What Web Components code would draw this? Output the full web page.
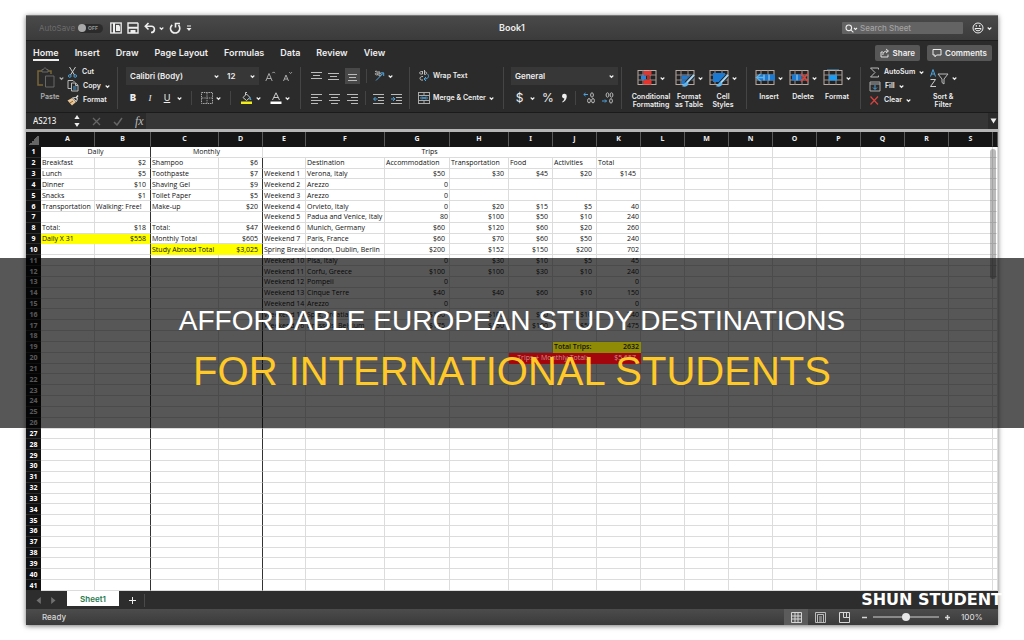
<!DOCTYPE html>
<html lang="en">
<head>
<meta charset="utf-8">
<title>Affordable European Study Destinations for International Students</title>
<style>
body{margin:0;background:#fff;font-family:Inter,"Liberation Sans",sans-serif;color:#eee}
</style>
</head>
<body>
<study-page></study-page>
<script>
const define = (name, html) => customElements.define(name, class extends HTMLElement {
  connectedCallback() {
    if (this.shadowRoot) return;
    const t = document.createElement('template');
    t.innerHTML = typeof html === 'function' ? html(this) : html;
    this.attachShadow({ mode: 'open' }).append(t.content.cloneNode(true));
  }
});

/* Icon artwork: [width, height, shapes] */
const line = 'class="l"';
const bars = (rows) => rows.map(([x, y, l]) => `<path d="M${x} ${y}h${l}" ${line} stroke="#bbb"/>`).join('');
const gridArt = (inner) => `<rect x="1" y="1.500" width="18" height="14" fill="#222" stroke="#b9aaa4"/><path d="M1 6h18M1 11h18M6 1v15M13 1v15" stroke="#9c8f8a" fill="none"/>${inner}`;
const brush = '<path d="M18.500 6.500L11 14.500" stroke="#1d1d1d" stroke-width="4"/><path d="M19 6l-7.500 8" stroke="#a9d3ee" stroke-width="2"/><path d="M11.500 13c-2 0-2 3-5 4 3 1.500 7 .5 7-2.500z" fill="#5fb4ea"/>';
const icons = {
  chevron: [5, 5, `<path d="M.7 1.500L2.500 3.300 4.300 1.500" ${line} stroke-width="1.200"/>`],
  panel: [12, 12, `<rect x=".8" y="1" width="10.400" height="10" ${line} stroke-width="1.300"/><path d="M4 1v10" ${line} stroke-width="2"/><path d="M6 3h3l1 1.500V9H6z" fill="currentColor"/>`],
  save: [12, 12, `<path d="M1 1h9.500l.5.5V11H1z" ${line} stroke-width="1.400"/><path d="M1 4.800h10v2H1zM3.500 8h5v3h-5z" fill="currentColor"/>`],
  undo: [12, 12, `<path d="M4.500 1L1.300 4.300l3.200 3.200M1.500 4.300h6c4 0 4 6.200-.5 6.200" ${line} stroke-width="1.600"/>`],
  redo: [12, 12, `<path d="M3.200 2.800C-.2 6 2 11 6 11s6.300-4.500 3.500-8M6.500 5.500V1.500H11" ${line} stroke-width="1.600"/>`],
  more: [6, 7, '<path d="M1 1h4" stroke="currentColor"/><path d="M.5 3h5L3 6z" fill="currentColor"/>'],
  search: [13, 9, `<circle cx="3.800" cy="3.800" r="2.800" ${line} stroke-width="1.100"/><path d="M5.800 5.800l2.600 2.600M9 4l1.500 1.500L12 4" ${line} stroke-width="1.100"/>`],
  smile: [12, 12, `<circle cx="6" cy="6" r="5" ${line}/><path d="M3 6.500h6c0 3-6 3-6 0zM4.300 3v1.800M7.700 3v1.800" ${line}/>`],
  share: [10, 10, `<path d="M3 4H1v5h7V6.500M2.800 7c0-3 2-4 5-4M6 1l2.500 2L6 5" ${line} stroke-width=".9"/>`],
  comment: [10, 10, `<path d="M1 1.500h8v5.500H4.500L3 8.800V7H1z" ${line}/>`],
  paste: [20, 22, `<path d="M6 4H2v14h5" ${line} stroke="#a5873f" stroke-width="1.500"/><path d="M12 4h3v3" ${line} stroke="#a5873f" stroke-width="1.500"/><path d="M6 2.500h1.500c0-2 3-2 3 0H12V5H6z" ${line} stroke="#8a8a8a"/><path d="M9.500 9H18v11H9.500z" ${line} stroke="#8a8a8a"/>`],
  cut: [11, 11, `<path d="M2.500 0L7.500 8M8.500 0L3.500 8" ${line} stroke="#ccc"/><circle cx="2.800" cy="9" r="1.300" ${line} stroke="#4ea4dd"/><circle cx="8.200" cy="9" r="1.300" ${line} stroke="#4ea4dd"/>`],
  copy: [12, 12, `<path d="M4 8.500H1v-8h5l1.500 1.500" ${line} stroke="#bbb"/><path d="M4.500 3h4.200L11 5.200V11H4.500zM8.500 3v2.500H11" ${line} stroke="#bbb"/><path d="M6 7h3.500M6 9h3.500" stroke="#4ea4dd"/>`],
  painter: [12, 11, '<path d="M.5 5.500L5 3l4 4-4 3.500z" fill="#e7c79a"/><path d="M3 8l3-2" stroke="#94621f"/><path d="M5.500 3l4 3.500 1-3-2-1z" fill="#333" stroke="#ddd"/><path d="M9 3l2-2.500" stroke="#ddd" stroke-width="1.500"/>'],
  grow: [11, 11, `<path d="M.8 10L4 2.500 7.200 10M2 7.500h4" ${line} stroke="#aaa"/><path d="M7.300 2.200L8.600.9 9.900 2.200" ${line} stroke="#aaa"/>`],
  shrink: [11, 11, `<path d="M1.500 10L4 4l2.500 6M2.300 8h3.400" ${line} stroke="#aaa"/><path d="M7.300 1.200L8.600 2.500 9.900 1.200" ${line} stroke="#aaa"/>`],
  borders: [12, 12, `<rect x=".5" y=".5" width="11" height="11" ${line} stroke="#aaa" stroke-dasharray="1.500 .8"/><path d="M6 1v10M1 6h10" ${line} stroke="#999" stroke-dasharray="1.500 .8"/>`],
  fill: [13, 12, `<path d="M3 5.500l3.500-3.500 3.500 3.500-3.500 3z" ${line} stroke="#ccc"/><path d="M5.500 3V.5h1.500" ${line} stroke="#ccc"/><path d="M10 4.500l1.500 3.500-2 0z" fill="#4ea4dd"/><path d="M1 9.500h11v2.500H1z" fill="#f2ec17"/>`],
  fontcolor: [12, 12, `<path d="M2.500 8L6 .8 9.500 8M3.800 5.500h4.400" ${line} stroke="#ccc"/><path d="M.5 9.500h11V12H.5z" fill="#fff"/>`],
  top: [11, 11, bars([[0, 1.5, 11], [2, 4.5, 7], [0, 7.5, 11]])],
  middle: [11, 11, bars([[0, 2.5, 11], [2, 5.5, 7], [0, 8.5, 11]])],
  bottom: [11, 11, bars([[1, 3.5, 9], [2, 6.5, 7], [1, 9.5, 9]])],
  left: [11, 11, bars([[0, 1.5, 11], [0, 4.5, 7], [0, 7.5, 11], [0, 10.5, 7]])],
  center: [11, 11, bars([[0, 1.5, 11], [2, 4.5, 7], [0, 7.5, 11], [2, 10.5, 7]])],
  right: [11, 11, bars([[0, 1.5, 11], [4, 4.5, 7], [0, 7.5, 11], [4, 10.5, 7]])],
  orient: [12, 12, `<path d="M2 1.500c3-1 3 1 2.500 3.500-3 0-3-2-.5-2M6 1v5c3 0 3-3 0-3" ${line} stroke="#bbb"/><path d="M3 10.500L10.500 3M10.700 6V2.800H7.500" ${line} stroke="#4ea4dd"/>`],
  outdent: [11, 11, bars([[0, 1.5, 11], [5, 4.5, 6], [5, 7.5, 6], [0, 10.5, 11]]) + `<path d="M4.500 6H.8M2.500 4L.6 6l1.900 2" ${line} stroke="#4ea4dd"/>`],
  indent: [11, 11, bars([[0, 1.5, 11], [5, 4.5, 6], [5, 7.5, 6], [0, 10.5, 11]]) + `<path d="M0 6h3.800M2 4l1.900 2L2 8" ${line} stroke="#4ea4dd"/>`],
  wrap: [12, 12, `<path d="M4.500 1.500c-4 0-4 3 0 2.500V1M6.500 0v4.500c3 0 3-3 0-2.500M5 6.500C1 6 1 11 5 10" ${line} stroke="#bbb"/><path d="M9.500 4c2 2 1 5-3 5M8 7L6 9l2 2" ${line} stroke="#4ea4dd"/>`],
  merge: [12, 12, `<rect x=".5" y=".5" width="11" height="11" ${line} stroke="#aaa"/><path d="M1 3.500h10M1 8.500h10M6 1v2M6 9v2" ${line} stroke="#aaa"/><path d="M2 6h8M4 4.500L5.500 6 4 7.500M8 4.500L6.500 6 8 7.500" ${line} stroke="#4ea4dd"/>`],
  comma: [7, 10, '<path d="M1 3a2.200 2.200 0 1 1 4.800.5C5.500 6.500 4 8.500 1.500 9.500L1.200 8.800C2.500 8 3.200 7 3.300 5.300 2 5.300 1 4.400 1 3z" fill="currentColor"/>'],
  moredec: [12, 12, `<path d="M5 2.500H.8M2.500 1L.8 2.500 2.500 4" ${line} stroke="#4ea4dd"/><g ${line} stroke="#bbb"><ellipse cx="9" cy="3" rx="1.400" ry="2.200"/><ellipse cx="6" cy="8.700" rx="1.400" ry="2.200"/><ellipse cx="10" cy="8.700" rx="1.400" ry="2.200"/></g>`],
  lessdec: [12, 12, `<path d="M0 9h4.500M3 7.500L4.500 9 3 10.500" ${line} stroke="#4ea4dd"/><g ${line} stroke="#bbb"><ellipse cx="5.500" cy="3" rx="1.400" ry="2.200"/><ellipse cx="9.500" cy="3" rx="1.400" ry="2.200"/><ellipse cx="9" cy="8.900" rx="1.400" ry="2.200"/></g>`],
  condfmt: [20, 18, gridArt('<path d="M6.500 2h8v4h-8zM6.500 11h8v4.500h-8z" fill="#e3342f"/><path d="M4 6.500h5v4H4z" fill="#2b82d9"/><path d="M10 6.500h3v4h-3z" fill="#b03028"/>')],
  fmttable: [20, 18, gridArt('<path d="M6.500 6.500h6v4h-6zM13.500 6.500h5v4h-5zM6.500 11.500h6v3.500h-6z" fill="#1d7ad2"/>' + brush)],
  cellstyles: [20, 18, gridArt('<path d="M4 4h12v9H4z" fill="#1d7ad2"/>' + brush)],
  insert: [20, 18, gridArt('<path d="M4 5.500h16v6H4z" fill="#1d7ad2"/><path d="M9 5.500v6M14 5.500v6" stroke="#a9d3ee"/><path d="M5.500 5L1.500 8.500 5.500 12M2 8.500h7" fill="none" stroke="#5fb4ea" stroke-width="1.500"/>')],
  delete: [20, 18, gridArt('<path d="M3 5.500h9v6H3z" fill="#1d7ad2"/><path d="M8 5.500v6" stroke="#a9d3ee"/><path d="M12 4.500l7 8M19 4.500l-7 8" stroke="#d8443f" stroke-width="1.800"/>')],
  format: [20, 18, gridArt('<path d="M6 6h8v5.500H6z" fill="#1d9af2"/><path d="M4 0h12" stroke="#4ea4dd"/>')],
  sum: [11, 11, `<path d="M9.500 2.500V1H1.500L6 5.500 1.500 10h8V8.500" ${line} stroke="#bbb"/>`],
  filldown: [12, 11, `<path d="M1 1h10v9H1zM1 3h10" ${line} stroke="#aaa"/><path d="M6 4v4M4 6.500L6 8.500l2-2" ${line} stroke="#4ea4dd"/>`],
  clear: [11, 11, `<path d="M1.500 1.500l7.500 8M9 1.500l-7.500 8" ${line} stroke="#d8443f" stroke-width="1.200"/>`],
  sort: [20, 20, `<path d="M1.500 8.500L4 1.500l2.500 7M2.300 6h3.400" ${line} stroke="#4ea4dd"/><path d="M1.500 11.500h5l-5 7h5.500" ${line} stroke="#ccc"/><path d="M9 6h10l-4 5v5l-2-1.500V11z" ${line} stroke="#bbb"/>`],
  stepper: [6, 12, '<path d="M3 0l2.600 4H.4zM3 12L.4 8h5.200z" fill="currentColor"/>'],
  cross: [9, 9, `<path d="M1 1l7 7M8 1L1 8" ${line} stroke="#666" stroke-width="1.300"/>`],
  check: [10, 9, `<path d="M1 5l3 3 5-7" ${line} stroke="#666" stroke-width="1.500"/>`],
  down: [7, 6, '<path d="M.5 .5h6L3.500 5.500z" fill="currentColor"/>'],
  prev: [5, 7, '<path d="M4.800 0v7L.5 3.500z" fill="#707070"/>'],
  next: [5, 7, '<path d="M.2 0v7l4.300-3.500z" fill="#707070"/>'],
  normal: [11, 11, `<path d="M.5.5h10v10H.5zM4 1v9M7 1v9M1 4h9M1 7h9" ${line}/>`],
  page: [11, 11, `<path d="M.5.5v10h10V.5zM2.500 2.500h6v8M2.500 2.500v8M4 5h3M4 7h3M4 9h3" ${line} stroke="#bbb"/>`],
  breaks: [11, 11, `<path d="M.5.5h10v10H.5zM4.500.5v5h6M7.500.5v5" ${line}/>`],
  minus: [7, 7, `<path d="M1 3.500h5" ${line} stroke-width="1.500"/>`],
  plus: [7, 7, `<path d="M1 3.500h5M3.500 1v5" ${line} stroke-width="1.500"/>`],
  add: [9, 9, `<path d="M1 4.500h7M4.500 1v7" ${line}/>`]
};
define('ui-icon', el => {
  const [w, h, art] = icons[el.getAttribute('name')];
  return `<style>:host{display:block;flex:none;width:${w}px;height:${h}px}svg{display:block}.l{fill:none}.l:not([stroke]){stroke:currentColor}</style>
  <svg width="${w}" height="${h}" viewBox="0 0 ${w} ${h}" aria-hidden="true">${art}</svg>`;
});

const buttonReset = 'button{appearance:none;border:0;margin:0;padding:0;background:none;color:inherit;font:inherit;white-space:nowrap;display:flex;align-items:center}';

/* Small button: icon, optional text, optional menu chevron */
define('tool-button', el => `<style>
:host{display:block;flex:none}${buttonReset}
button{gap:4px;height:14px;font-size:7px;line-height:10px;font-weight:600}
:host([pressed]) button{background:#484848;height:16px;padding:0 2px}
:host([icon-only]) button{gap:6px}
:host([wide]) button{gap:3px}
</style><button type="button" aria-label="${el.getAttribute('label') || el.textContent.trim()}">
${el.hasAttribute('icon') ? `<ui-icon name="${el.getAttribute('icon')}"></ui-icon>` : ''}<slot></slot>
${el.hasAttribute('menu') ? '<ui-icon name="chevron"></ui-icon>' : ''}</button>`);

/* Large button: icon over a one or two line caption */
define('big-button', el => `<style>
:host{display:block;flex:none;width:34px}${buttonReset}
button{flex-direction:column;width:100%;padding-top:3px;font-size:7px;line-height:8px;font-weight:600;text-align:center}
.art{display:flex;align-items:center;justify-content:center;gap:3px;height:20px;margin-bottom:5px}
</style><button type="button"><span class="art"><ui-icon name="${el.getAttribute('icon')}"></ui-icon><ui-icon name="chevron"></ui-icon></span><span><slot></slot></span></button>`);

define('drop-down', el => `<style>
:host{display:grid;align-items:center;background:#373737;height:18px}
select,ui-icon{grid-area:1/1}ui-icon{justify-self:end;margin-right:4px;pointer-events:none}
select{appearance:none;border:0;background:none;color:inherit;width:100%;height:18px;padding:0 4px;font:600 8px/10px Inter,"Liberation Sans",sans-serif}
</style><select aria-label="${el.getAttribute('label')}"><option>${el.getAttribute('value')}</option></select><ui-icon name="chevron"></ui-icon>`);

define('title-bar', `<style>
:host{display:grid;grid-template-columns:1fr auto 1fr;align-items:center;height:26px;background:linear-gradient(#494949,#3b3b3b);border-bottom:1px solid #1d1d1d;box-sizing:border-box;border-top:1px solid #777}
.left,.right{display:flex;align-items:center}
.left{padding-left:13px;gap:5px}.right{justify-content:flex-end;padding-right:6px;gap:4px}
label{display:flex;align-items:center;gap:3px;font-size:8px;color:#6c6c6c;margin-right:2px}
.switch{display:grid;align-items:center;width:25px;height:9px;border-radius:5px;background:#2b2b2b;font-size:5px;color:#999}
.switch input,.switch span{grid-area:1/1}.switch span{margin-left:10px;font-weight:700}
input[type=checkbox]{appearance:none;margin:0;width:8px;height:8px;border-radius:50%;background:#aaa}
h1{margin:0;font-size:9px;line-height:12px;font-weight:600}
.search{display:flex;align-items:center;gap:2px;width:121px;height:12px;background:#636363;padding-left:3px;box-sizing:border-box;margin-right:5px;border-radius:1px}
.search input{flex:1;min-width:0;border:0;padding:0;background:none;font:500 8px/12px Inter,"Liberation Sans",sans-serif;color:#eee}
.search input::placeholder{color:#a2a2a2;opacity:1}
</style>
<div class="left"><label>AutoSave <span class="switch"><input type="checkbox"><span>OFF</span></span></label>
<tool-button icon="panel" label="Show panel"></tool-button><tool-button icon="save" label="Save"></tool-button>
<tool-button wide icon="undo" menu label="Undo"></tool-button><tool-button icon="redo" label="Redo"></tool-button><tool-button icon="more" label="Customize toolbar"></tool-button></div>
<h1>Book1</h1>
<div class="right"><div class="search"><ui-icon name="search"></ui-icon><input type="search" aria-label="Search Sheet" placeholder="Search Sheet"></div>
<tool-button wide icon="smile" menu label="Feedback"></tool-button></div>`);

define('ribbon-tabs', `<style>
:host{display:flex;align-items:center;justify-content:space-between;height:23px;padding:0 6px 0 7px}${buttonReset}
nav,.actions{display:flex}nav{gap:16px}.actions{gap:7px}
nav button{font-size:9px;line-height:12px;font-weight:600;border-top:2px solid transparent;border-bottom:2px solid transparent}
nav button[aria-selected=true]{border-bottom-color:#eee}
.actions button{height:16px;padding:0 5px;gap:3px;background:#575757;border-radius:2px;font-size:8px;font-weight:600}
</style>
<nav role="tablist">${['Home', 'Insert', 'Draw', 'Page Layout', 'Formulas', 'Data', 'Review', 'View'].map((t, i) => `<button type="button" role="tab" aria-selected="${!i}">${t}</button>`).join('')}</nav>
<div class="actions"><button type="button"><ui-icon name="share"></ui-icon>Share</button><button type="button"><ui-icon name="comment"></ui-icon>Comments</button></div>`);

define('ribbon-group', `<style>
:host{display:flex;box-sizing:border-box;height:46px;width:var(--w);flex:none;padding-left:var(--pad,8px);background:linear-gradient(#454545,#454545) right center/1px 42px no-repeat}
:host([last]){background:none;flex:1}
</style><slot></slot>`);

define('tool-ribbon', `<style>
:host{display:flex;align-items:center;height:48px}
.rows{display:grid;grid-template-rows:18px 18px;align-content:start;row-gap:4px;flex:1;min-width:0;padding-top:2px}
.row{display:flex;align-items:center}
.stack{display:grid;grid-template-rows:repeat(3,14px);align-content:start;align-items:center}
.paste{width:34px;opacity:.65}
.sep{width:1px;height:14px;background:#444}
.glyph{width:8px;text-align:center;font-size:9px}
.money{width:9px;text-align:center;font-size:12px;font-weight:400;line-height:14px}
.fonts{display:grid;grid-template-columns:97px 36px}
</style>
<ribbon-group style="--w:92px;--pad:7px"><big-button class="paste" icon="paste">Paste</big-button>
 <div class="stack"><tool-button icon="cut">Cut</tool-button><tool-button icon="copy" menu>Copy</tool-button><tool-button icon="painter">Format</tool-button></div></ribbon-group>
<ribbon-group style="--w:183px"><div class="rows">
 <div class="row" style="gap:6px"><div class="fonts"><drop-down label="Font" value="Calibri (Body)"></drop-down><drop-down label="Font size" value="12"></drop-down></div><tool-button icon="grow" label="Increase font size"></tool-button><tool-button icon="shrink" label="Decrease font size"></tool-button></div>
 <div class="row" style="gap:9px;padding-left:3px"><tool-button label="Bold"><b class="glyph">B</b></tool-button><tool-button label="Italic"><i class="glyph" style="font-weight:400;font-family:'Liberation Serif',serif">I</i></tool-button><tool-button icon-only menu label="Underline"><u class="glyph" style="font-weight:400">U</u></tool-button><span class="sep"></span><tool-button wide icon="borders" menu label="Borders"></tool-button><span class="sep"></span><tool-button wide icon="fill" menu label="Fill color"></tool-button><tool-button wide icon="fontcolor" menu label="Font color"></tool-button></div>
</div></ribbon-group>
<ribbon-group style="--w:109px;--pad:10px"><div class="rows">
 <div class="row" style="gap:6px"><tool-button icon="top" label="Align top"></tool-button><tool-button icon="middle" label="Align middle"></tool-button><tool-button pressed icon="bottom" label="Align bottom"></tool-button><span class="sep"></span><tool-button wide icon="orient" menu label="Orientation"></tool-button></div>
 <div class="row" style="gap:7px"><tool-button icon="left" label="Align left"></tool-button><tool-button icon="center" label="Center"></tool-button><tool-button icon="right" label="Align right"></tool-button><span class="sep"></span><tool-button icon="outdent" label="Decrease indent"></tool-button><tool-button icon="indent" label="Increase indent"></tool-button></div>
</div></ribbon-group>
<ribbon-group style="--w:94px"><div class="rows">
 <div class="row"><tool-button wide icon="wrap">Wrap Text</tool-button></div>
 <div class="row"><tool-button wide icon="merge" menu>Merge &amp; Center</tool-button></div>
</div></ribbon-group>
<ribbon-group style="--w:118px;--pad:7px"><div class="rows">
 <drop-down style="margin-right:4px" label="Number format" value="General"></drop-down>
 <div class="row" style="gap:7px;padding-left:4px"><tool-button icon-only menu label="Currency"><span class="money">$</span></tool-button><tool-button label="Percent"><span class="money">%</span></tool-button><tool-button icon="comma" style="margin-left:3px" label="Comma style"></tool-button><span class="sep"></span><tool-button icon="moredec" label="Increase decimal"></tool-button><tool-button icon="lessdec" label="Decrease decimal"></tool-button></div>
</div></ribbon-group>
<ribbon-group style="--w:125px"><big-button style="width:42px" icon="condfmt">Conditional<br>Formatting</big-button><big-button icon="fmttable">Format<br>as Table</big-button><big-button icon="cellstyles">Cell<br>Styles</big-button></ribbon-group>
<ribbon-group style="--w:114px;--pad:5px"><big-button icon="insert">Insert</big-button><big-button icon="delete">Delete</big-button><big-button icon="format">Format</big-button></ribbon-group>
<ribbon-group last><div class="stack"><tool-button icon="sum" menu>AutoSum</tool-button><tool-button icon="filldown" menu>Fill</tool-button><tool-button icon="clear" menu>Clear</tool-button></div><big-button icon="sort" style="margin-left:2px">Sort &amp;<br>Filter</big-button></ribbon-group>`);

define('formula-bar', `<style>
:host{display:flex;align-items:center;background:#2b2b2b;border-top:1px solid #1b1b1b;border-bottom:3px solid #b5b5b5;height:16px}
input{border:0;padding:0;background:none;color:#eee;font:500 8px/14px "Noto Sans",sans-serif;min-width:0}
.name{width:41px;padding-left:7px}
.tools{display:flex;align-items:center;gap:12px;width:72px}
.fx{font:italic 12px/14px "Liberation Serif",serif;color:#bbb}
.formula{flex:1;height:16px;background:#363636}
.tail{width:10px;display:flex;justify-content:center}
</style>
<input class="name" aria-label="Name box" value="AS213">
<div class="tools"><ui-icon name="stepper"></ui-icon><ui-icon name="cross"></ui-icon><ui-icon name="check"></ui-icon><span class="fx">fx</span></div>
<input class="formula" aria-label="Formula"><span class="tail"><ui-icon name="down"></ui-icon></span>`);

/* Sheet data, one entry per spreadsheet row, columns A to K */
const data = {
  2: ['Breakfast', '$2', 'Shampoo', '$6', '', 'Destination', 'Accommodation', 'Transportation', 'Food', 'Activities', 'Total'],
  3: ['Lunch', '$5', 'Toothpaste', '$7', 'Weekend 1', 'Verona, Italy', '$50', '$30', '$45', '$20', '$145'],
  4: ['Dinner', '$10', 'Shaving Gel', '$9', 'Weekend 2', 'Arezzo', '0'],
  5: ['Snacks', '$1', 'Toilet Paper', '$5', 'Weekend 3', 'Arezzo', '0'],
  6: ['Transportation', 'Walking: Free!', 'Make-up', '$20', 'Weekend 4', 'Orvieto, Italy', '0', '$20', '$15', '$5', '40'],
  7: ['', '', '', '', 'Weekend 5', 'Padua and Venice, Italy', '80', '$100', '$50', '$10', '240'],
  8: ['Total:', '$18', 'Total:', '$47', 'Weekend 6', 'Munich, Germany', '$60', '$120', '$60', '$20', '260'],
  9: ['Daily X 31', '$558', 'Monthly Total', '$605', 'Weekend 7', 'Paris, France', '$60', '$70', '$60', '$50', '240'],
  10: ['', '', 'Study Abroad Total', '$3,025', 'Spring Break', 'London, Dublin, Berlin', '$200', '$152', '$150', '$200', '702'],
  11: ['', '', '', '', 'Weekend 10', 'Pisa, Italy', '0', '$30', '$10', '$5', '45'],
  12: ['', '', '', '', 'Weekend 11', 'Corfu, Greece', '$100', '$100', '$30', '$10', '240'],
  13: ['', '', '', '', 'Weekend 12', 'Pompeii', '0', '', '', '', '0'],
  14: ['', '', '', '', 'Weekend 13', 'Cinque Terre', '$40', '$40', '$60', '$10', '150'],
  15: ['', '', '', '', 'Weekend 14', 'Arezzo', '0', '', '', '', '0'],
  16: ['', '', '', '', 'Weekend 15', 'Split, Croatia', '$100', '$100', '$30', '$10', '240'],
  17: ['', '', '', '', 'Weekend 16', 'Brussels, Belgium', '$175', '$150', '$100', '$50', '475'],
  19: ['', '', '', '', '', '', '', '', '', 'Total Trips:', '2632']
};
const marks = { '9A': 'hl', '9B': 'hl', '10C': 'hl', '10D': 'hl', '19J': 'hl over', '19K': 'hl over' };
const letters = 'ABCDEFGHIJKLMNOPQRS'.split('');
const widths = [54, 56, 68, 44, 43, 79, 65, 59];
const cell = (r, c) => {
  const v = (data[r] || [])[c] || '';
  const kind = /^\$/.test(v) ? 'money' : /^\d/.test(v) ? 'num' : '';
  const edge = c === 1 || c === 3 ? 'edge' : '';
  return `<td class="${kind} ${edge} ${marks[r + (letters[c] || '')] || ''}">${v}</td>`;
};
const rowCells = r => {
  const all = (a, b) => Array.from({ length: b - a }, (_, i) => cell(r, a + i)).join('');
  if (r === 1) return `<td colspan="2" class="mid edge">Daily</td><td colspan="2" class="mid">Monthly</td><td colspan="6" class="mid">Trips</td>${all(10, 20)}`;
  if (r === 20) return `${all(0, 8)}<td colspan="2" class="mid sum">Trips + Monthly Total:</td><td class="money sum">$5,657</td>${all(11, 20)}`;
  return all(0, 20);
};
define('sheet-grid', `<style>
:host{display:grid;position:relative;flex:1;background:#fff;color:#111}
table{width:100%;height:100%;table-layout:fixed;border-collapse:separate;border-spacing:0;font:500 7px/8px "Open Sans",sans-serif;white-space:nowrap}
thead th{height:14px;padding:0;background:#151515;color:#eee;border-right:1px solid #5a5a5a;border-bottom:1px solid #151515;font:700 7px/14px "Noto Sans",sans-serif}
thead th:first-child{border-right-color:#151515;background:linear-gradient(135deg,#151515 50%,#666 50%) 3px 3px/10px 10px no-repeat #151515}
tbody th{padding:1px 0 0;background:#111;color:#fff;border-bottom:1px solid #2c2c2c;font:700 7px/8px "Noto Sans",sans-serif;text-align:center}
td{padding:1px 1px 0;border-right:1px solid #dcdcdc;border-bottom:1px solid #dcdcdc}
.money{text-align:right;padding-right:4px}.num{text-align:right}.mid{text-align:center}
.edge{border-right-color:#333}
.hl{background:#ff0;border-color:#ff0}.hl.edge{border-right-color:#333}
.sum{background:#a3060c;border-color:#a3060c;color:#c98e90}
/* The trip totals stay readable through the banner's shade */
.over,.sum{position:relative;z-index:2}
.over{background:#8f8b06;border-color:#8f8b06;font-weight:600}
.thumb{position:absolute;right:2px;top:17px;width:6px;height:130px;border-radius:3px;background:rgba(60,60,60,.35)}
</style>
<table><colgroup><col style="width:15px">${Array.from({ length: 19 }, (_, i) => `<col style="width:${widths[i] || 44}px">`).join('')}<col></colgroup>
<thead><tr><th></th>${letters.map(l => `<th scope="col">${l}</th>`).join('')}<th></th></tr></thead>
<tbody>${Array.from({ length: 41 }, (_, i) => `<tr><th scope="row">${i + 1}</th>${rowCells(i + 1)}</tr>`).join('')}</tbody></table>
<div class="thumb"></div>`);

define('sheet-footer', `<style>
:host{display:block}${buttonReset}
.tabs{display:flex;align-items:center;height:18px;background:#2d2d2d;padding-left:10px}
.arrows{display:flex;gap:10px;width:31px}
.tab{align-self:flex-start;height:15px;width:52px;justify-content:center;background:#fff;color:#1f7a4d;font-size:8px;font-weight:600;margin-right:9px}
.tabs i{width:1px;height:13px;background:#4a4a4a;margin-left:7px}
.status{display:flex;align-items:center;justify-content:space-between;height:16px;padding:0 16px;background:linear-gradient(#4c4c4c,#3a3a3a);font-size:8px;line-height:16px;font-weight:500;color:#d6d6d6}
.view{display:flex;align-items:center}
.view button{width:24px;height:16px;justify-content:center}.view button[aria-pressed=true]{background:#5b5b5b}
.view .step{width:17px}
input{appearance:none;margin:0;width:66px;height:8px;background:linear-gradient(#8a8a8a,#8a8a8a) center/100% 2px no-repeat}
input::-webkit-slider-thumb{appearance:none;width:8px;height:8px;border-radius:50%;background:#e6e6e6}
output{margin-left:5px;width:21px}
</style>
<div class="tabs"><span class="arrows"><button type="button" aria-label="Previous sheet"><ui-icon name="prev"></ui-icon></button><button type="button" aria-label="Next sheet"><ui-icon name="next"></ui-icon></button></span><button type="button" class="tab">Sheet1</button><button type="button" aria-label="Add sheet"><ui-icon name="add"></ui-icon></button><i></i></div>
<div class="status"><span>Ready</span><div class="view"><button type="button" aria-pressed="true" aria-label="Normal view"><ui-icon name="normal"></ui-icon></button><button type="button" aria-label="Page layout view"><ui-icon name="page"></ui-icon></button><button type="button" aria-label="Page break view"><ui-icon name="breaks"></ui-icon></button><button type="button" class="step" aria-label="Zoom out"><ui-icon name="minus"></ui-icon></button><input type="range" aria-label="Zoom" min="0" max="200" value="100"><button type="button" class="step" aria-label="Zoom in"><ui-icon name="plus"></ui-icon></button><output>100%</output></div></div>`);

define('app-window', `<style>
:host{display:flex;flex-direction:column;background:#2b2b2b;box-shadow:0 1px 5px rgba(0,0,0,.55)}
</style><slot></slot>`);

define('title-banner', `<style>
:host{position:absolute;left:0;right:0;top:258px;height:170px;display:block;font-family:"Liberation Sans",Arial,sans-serif;text-align:center}
.shade,.text{position:absolute;inset:0}
.shade{z-index:1;background:rgba(0,0,0,.66)}
.text{z-index:3;padding-top:6px;display:flex;flex-direction:column;justify-content:center}
h2,p{margin:0;font-weight:400;line-height:50px}
p{font-size:28px;color:#fff}h2{font-size:40px;color:#ffc928}
</style><div class="shade"></div><div class="text"><p><slot name="lead"></slot></p><h2><slot></slot></h2></div>`);

define('study-page', `<style>
:host{display:flex;flex-direction:column;position:relative;box-sizing:border-box;min-height:100vh;padding:15px 26px}
app-window{flex:1}
.brand{position:absolute;right:22px;bottom:30px;font:700 16px/20px "DejaVu Sans",sans-serif;color:#fff}
</style>
<app-window><title-bar></title-bar><ribbon-tabs></ribbon-tabs><tool-ribbon></tool-ribbon><formula-bar></formula-bar><sheet-grid></sheet-grid><sheet-footer></sheet-footer></app-window>
<title-banner><span slot="lead">AFFORDABLE EUROPEAN STUDY DESTINATIONS</span>FOR INTERNATIONAL STUDENTS</title-banner>
<span class="brand">SHUN STUDENT</span>`);
</script>
</body>
</html>
